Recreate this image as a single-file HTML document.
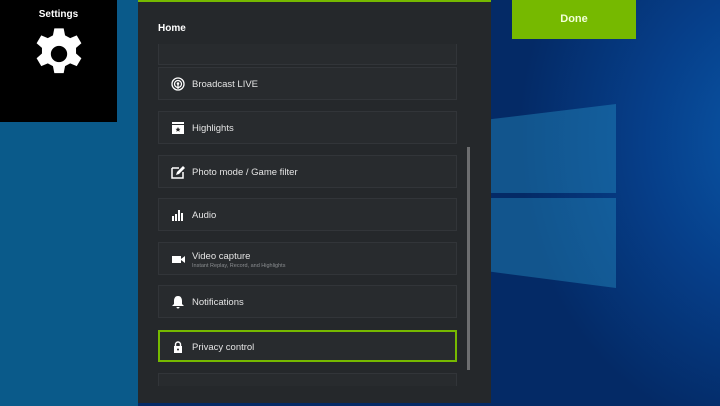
<!DOCTYPE html>
<html><head><style>
*{margin:0;padding:0;box-sizing:border-box}
body{width:720px;height:406px;overflow:hidden;position:relative;font-family:"Liberation Sans",sans-serif;background:#0a5a8a}
#bg{position:absolute;left:138px;top:0;width:582px;height:406px;background:radial-gradient(ellipse 260px 300px at 640px 140px,#0a58a8 0%,#063f8a 50%,#042a66 100%)}
.pane{position:absolute;background:rgba(40,150,200,0.4)}
#set{position:absolute;left:0;top:0;width:117px;height:122px;background:#000;color:#fff;text-align:center}
#set .t{font-weight:bold;font-size:10px;margin-top:9px}
#panel{position:absolute;left:138px;top:0;width:353px;height:403px;background:#25282b;border-top:2px solid #76b900}
#home{position:absolute;left:20px;top:21px;color:#fff;font-weight:bold;font-size:10px}
.card{position:absolute;left:20px;width:299px;height:33px;background:#282b2e;border:1px solid #323539;color:#e4e4e4;font-size:9.5px}
.card .ic{position:absolute;left:12px;top:9px;width:14px;height:14px}
.card .l{position:absolute;left:33px;top:11px}
#clip{position:absolute;left:0;top:42px;width:353px;height:342px;overflow:hidden}
#done{position:absolute;left:512px;top:0;width:124px;height:39px;background:#76b900;color:#f2ffd8;font-weight:bold;font-size:11px;text-align:center;line-height:39px}
</style></head><body>
<div id="bg">
<div class="pane" style="left:353px;top:104px;width:125px;height:89px;clip-path:polygon(0 17%,100% 0,100% 100%,0 100%)"></div>
<div class="pane" style="left:353px;top:198px;width:125px;height:90px;clip-path:polygon(0 0,100% 0,100% 100%,0 82%)"></div>
</div>
<div id="set"><div class="t">Settings</div>
<svg width="56" height="56" viewBox="0 0 24 24" style="margin-top:6px"><path fill="#fff" fill-rule="evenodd" d="M10 1h4l.6 3 2.2 1.2 2.8-1.2 2 3.4-2.3 2v2.4l2.3 2-2 3.4-2.8-1.2-2.2 1.2-.6 3h-4l-.6-3-2.2-1.2-2.8 1.2-2-3.4 2.3-2v-2.4l-2.3-2 2-3.4 2.8 1.2L9.4 4zM12 8.5a3.5 3.5 0 1 0 0 7 3.5 3.5 0 1 0 0-7z"/></svg>
</div>
<div id="panel">
<div id="home">Home</div>
<div id="clip">
<div class="card" style="top:-12px"></div>
<div class="card" style="top:23px"><svg class="ic" viewBox="0 0 14 14"><circle cx="7" cy="7" r="6" fill="none" stroke="#fff" stroke-width="1.3"/><circle cx="7" cy="7" r="3.5" fill="none" stroke="#fff" stroke-width="1.2"/><circle cx="7" cy="6.5" r="1.3" fill="#fff"/><rect x="6.4" y="7" width="1.2" height="5" fill="#fff"/></svg><span class="l">Broadcast LIVE</span></div>
<div class="card" style="top:67px"><svg class="ic" viewBox="0 0 14 14"><rect x="1" y="4" width="12" height="9" fill="#fff"/><path d="M1 1h12v2H1z" fill="#fff"/><path d="M7 6l.8 1.7 1.7.2-1.3 1.1.4 1.7L7 9.8l-1.6.9.4-1.7-1.3-1.1 1.7-.2z" fill="#222"/></svg><span class="l">Highlights</span></div>
<div class="card" style="top:111px"><svg class="ic" viewBox="0 0 14 14"><path d="M1 3h7M1 3v10h11V7" fill="none" stroke="#fff" stroke-width="1.5"/><path d="M5 10l1-3 6-6 2 2-6 6z" fill="#fff"/></svg><span class="l">Photo mode / Game filter</span></div>
<div class="card" style="top:154px"><svg class="ic" viewBox="0 0 14 14"><path d="M1 8h2v5H1zM4 6h2v7H4zM7 2h2v11H7zM10 5h2v8h-2z" fill="#fff"/></svg><span class="l">Audio</span></div>
<div class="card" style="top:198px"><svg class="ic" viewBox="0 0 14 14"><rect x="1" y="4" width="9" height="7" fill="#fff"/><path d="M10 7l4-3v7l-4-3z" fill="#fff"/></svg><span class="l" style="top:8px">Video capture</span><span style="position:absolute;left:33px;top:20px;font-size:5.5px;color:#8a8d90">Instant Replay, Record, and Highlights</span></div>
<div class="card" style="top:241px"><svg class="ic" viewBox="0 0 14 14"><path d="M7 1c3 0 4 2.5 4 5v3l2 2H1l2-2V6c0-2.5 1-5 4-5z M5.5 12h3a1.5 1.5 0 0 1-3 0z" fill="#fff"/></svg><span class="l">Notifications</span></div>
<div class="card" style="top:286px;height:32px;border:2px solid #76b900"><svg class="ic" viewBox="0 0 14 14" style="top:8px;left:11px"><path d="M4.5 6V4.5a2.5 2.5 0 0 1 5 0V6" fill="none" stroke="#fff" stroke-width="1.4"/><rect x="3" y="6" width="8" height="7" fill="#fff"/><circle cx="7" cy="9.5" r="1" fill="#222"/></svg><span class="l" style="left:32px;top:10px">Privacy control</span></div>
<div class="card" style="top:329px"></div>
</div>
<div style="position:absolute;left:329px;top:145px;width:3px;height:223px;background:#6d6e70"></div>
</div>
<div id="done">Done</div>
</body></html>
